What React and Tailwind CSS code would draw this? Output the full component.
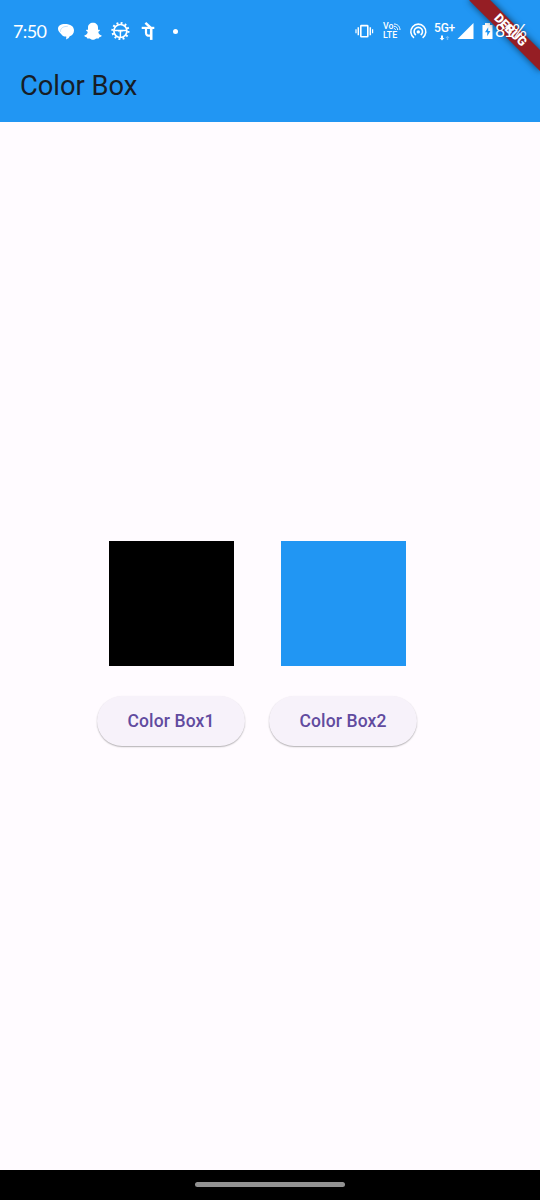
import React from "react";

function MessageIcon() {
  return (
    <svg className="ml-[10px] h-5 w-[18px]" viewBox="0 0 18 20" fill="none">
      <path d="M1 7.800C1 4.800 3.600 3 8 3c5.400 0 9 2.300 9 6.500 0 3-1.800 4.900-4.300 5.700-.5 1.500-1.700 2.500-3.700 3.200.4-1 .4-2 .2-2.800C7 15.700 5 14.700 4.100 13 2.400 11.600 1 9.800 1 7.800Z" fill="white" />
      <path d="M3.600 10.800C3.100 7.300 6 5.300 10.800 5.300" stroke="#2196f3" strokeOpacity=".35" strokeWidth=".8" />
    </svg>
  );
}

function GhostIcon() {
  return (
    <svg className="ml-[9px] h-5 w-[18px]" viewBox="0 0 18 20" fill="white">
      <path d="M9 1.800C6 1.800 4 3.900 4 6.500v2.200c-.7.300-1.700-.2-1.900.5-.1.800.9 1.200 1.500 1.600.4 1.600-1.300 3.200-3.200 3.700-.5.700.7 1.500 2.300 1.700l.6 1.300 2.400-.1C6.900 18.100 7.900 18.800 9 18.800s2.100-.7 3.300-1.400l2.400.1.6-1.300c1.600-.2 2.800-1 2.300-1.700-1.900-.5-3.600-2.100-3.200-3.700.6-.4 1.600-.8 1.500-1.600-.2-.7-1.200-.2-1.900-.5V6.500C14 3.900 12 1.800 9 1.800Z" />
    </svg>
  );
}

function GearIcon() {
  return (
    <svg className="ml-[8px] h-5 w-5" viewBox="0 0 20 20" fill="none" stroke="white">
      <circle cx="10.400" cy="10" r="6.500" strokeWidth="1.700" />
      <circle cx="10.400" cy="10" r="8" strokeWidth="2.200" strokeDasharray="1.900 2.289" />
      <path d="M4.400 9.500h12M10.400 9.500v6.500" strokeWidth="1.400" />
      <path d="M8.600 9.500h3.600v1.300H8.600z" strokeWidth=".6" />
    </svg>
  );
}

function PayIcon() {
  return (
    <svg className="ml-[11px] h-5 w-[14px]" viewBox="0 0 14 20" fill="none" stroke="white">
      <path d="M.7 6.900h12.600" strokeWidth="2.200" />
      <path d="M10.200 6.900v12" strokeWidth="2.600" />
      <path d="M5 7v4.800c0 2.300 1.300 3.200 4.900 2.600" strokeWidth="2.200" />
      <path d="M4.400 1.800 9.600 6.700" strokeWidth="2.500" />
    </svg>
  );
}

function VibrateIcon() {
  return (
    <svg className="h-5 w-5" viewBox="0 0 20 20" fill="none" stroke="white">
      <rect x="6.800" y="4.600" width="7" height="11.200" rx=".6" strokeWidth="1.600" />
      <path d="M4.300 6.200v8M16.300 6.200v8" strokeWidth="1.500" />
      <path d="M2 8.200v4M18.600 8.200v4" strokeWidth="1.200" />
    </svg>
  );
}

function VolteIcon() {
  return (
    <div className="ml-[9px] flex w-[18px] flex-col text-[8.800px] font-medium leading-[9px] tracking-[0.1px]">
      <div className="flex h-[8px]">
        <span className="-mt-px">Vo</span>
        <svg className="h-[8px] w-[7px] shrink-0" viewBox="0 0 7 8" fill="none" stroke="white" strokeWidth="1">
          <path d="M0 1c3.500 0 6 2.500 6 6M0 3.300c2.200 0 3.700 1.500 3.700 3.700M0 5.500c.9 0 1.500.6 1.500 1.500" />
        </svg>
      </div>
      <span>LTE</span>
    </div>
  );
}

function HotspotIcon() {
  return (
    <svg className="ml-[8px] h-5 w-[18px]" viewBox="0 0 18 20" fill="none" stroke="white" strokeWidth="1.600">
      <path d="M5 16.800a7.500 7.500 0 1 1 8.600 0" />
      <path d="M6.900 14a4.200 4.200 0 1 1 4.800 0" />
      <circle cx="9.300" cy="10.900" r="1.700" fill="white" stroke="none" />
    </svg>
  );
}

function NetworkType() {
  return (
    <div className="ml-[6px] flex w-[23px] flex-col items-center">
      <span className="text-[12px] font-medium leading-[13px] tracking-[-0.3px]">5G+</span>
      <svg className="h-[6px] w-3" viewBox="0 0 12 6" fill="white">
        <path d="M3 5.500.6 3H2V.5h2V3h1.400z" />
        <path d="M8.500.7 6.500 3h1.300v2h1.400V3h1.300z" opacity=".35" />
      </svg>
    </div>
  );
}

function StatusBar() {
  return (
    <div className="flex h-[52px] items-center pt-[10px] pl-[13px] text-white">
      <span className="w-[34px] whitespace-nowrap font-[Lato,sans-serif] text-[18px] leading-5 tracking-[-0.6px]">7:50</span>
      <MessageIcon />
      <GhostIcon />
      <GearIcon />
      <PayIcon />
      <span className="ml-[18px] size-[5px] rounded-full bg-white" />
      <div className="ml-auto flex w-[186px] items-center">
        <VibrateIcon />
        <VolteIcon />
        <HotspotIcon />
        <NetworkType />
        <svg className="ml-px h-5 w-[17px]" viewBox="0 0 17 20" fill="white">
          <path d="M16.500 2v16H.5z" />
        </svg>
        <svg className="ml-[8px] h-5 w-[11px]" viewBox="0 0 11 20">
          <path d="M3 2h5v2h2.500v14H.5V4H3z" fill="white" />
          <path d="M6.200 6.300 3 11.300h2.200v3.900l3.200-5.200H6.200z" fill="#2196f3" />
        </svg>
        <span className="relative z-20 ml-[2px] whitespace-nowrap font-[Lato,sans-serif] text-[17.500px] leading-5 tracking-[-1.300px]">81%</span>
      </div>
    </div>
  );
}

function DebugBanner() {
  return (
    <div className="absolute top-[22.500px] left-[460px] z-10 flex h-[15px] w-[100px] rotate-45 items-center justify-center bg-[#951e24] text-[12.500px] font-black leading-none text-white shadow-[0_0_7px_rgba(0,0,0,0.6)]">
      DEBUG
    </div>
  );
}

function ColorColumn({ color, label }) {
  return (
    <div className="flex w-[148px] flex-col items-center gap-[30px]">
      <div className={`size-[125px] ${color}`} />
      <button className="h-[50px] w-full rounded-full bg-[#f7f2fa] pt-px text-[17.500px] font-medium leading-[25px] tracking-[0.125px] text-[#614b9f] shadow-[0_1px_1.500px_rgba(0,0,0,0.3)]">
        {label}
      </button>
    </div>
  );
}

export default function App() {
  return (
    <div className="relative flex h-[1200px] w-[540px] flex-col overflow-hidden bg-[#fffbff] font-[Roboto,sans-serif]">
      <header className="bg-[#2196f3]">
        <StatusBar />
        <h1 className="flex h-[70px] items-center pb-px pl-5 text-[27.300px] leading-[35px] text-[#171d26]">Color Box</h1>
      </header>
      <DebugBanner />
      <main className="flex flex-1 gap-6 pt-[419px] pl-[97px]">
        <ColorColumn color="bg-black" label="Color Box1" />
        <ColorColumn color="bg-[#2196f3]" label="Color Box2" />
      </main>
      <footer className="flex h-[30px] items-center justify-center bg-black pb-px">
        <div className="h-[5px] w-[150px] rounded-full bg-[#919191]" />
      </footer>
    </div>
  );
}
